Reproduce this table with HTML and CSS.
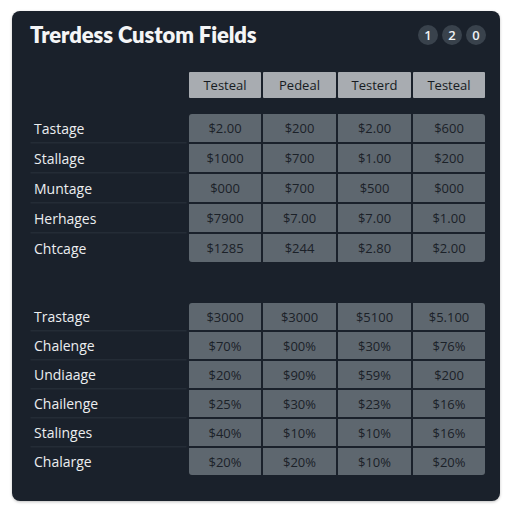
FILE: index.html
```html
<!DOCTYPE html>
<html>
<head>
<meta charset="utf-8">
<link rel="stylesheet" href="styles.css">
</head>
<body>
<div class="panel">
  <div class="top">
    <h1 class="title">Trerdess Custom Fields</h1>
    <div class="badges">
      <span class="badge">1</span>
      <span class="badge">2</span>
      <span class="badge">0</span>
    </div>
  </div>

  <div class="grid head">
    <div class="lbl-empty"></div>
    <div class="hcell">Testeal</div>
    <div class="hcell">Pedeal</div>
    <div class="hcell">Testerd</div>
    <div class="hcell">Testeal</div>
  </div>

  <div class="grid t1">
    <div class="lbl">Tastage</div><div class="cell tl">$2.00</div><div class="cell">$200</div><div class="cell">$2.00</div><div class="cell tr">$600</div>
    <div class="lbl">Stallage</div><div class="cell">$1000</div><div class="cell">$700</div><div class="cell">$1.00</div><div class="cell">$200</div>
    <div class="lbl">Muntage</div><div class="cell">$000</div><div class="cell">$700</div><div class="cell">$500</div><div class="cell">$000</div>
    <div class="lbl">Herhages</div><div class="cell">$7900</div><div class="cell">$7.00</div><div class="cell">$7.00</div><div class="cell">$1.00</div>
    <div class="lbl last">Chtcage</div><div class="cell bl">$1285</div><div class="cell">$244</div><div class="cell">$2.80</div><div class="cell br">$2.00</div>
  </div>

  <div class="grid t2">
    <div class="lbl">Trastage</div><div class="cell tl">$3000</div><div class="cell">$3000</div><div class="cell">$5100</div><div class="cell tr">$5.100</div>
    <div class="lbl">Chalenge</div><div class="cell">$70%</div><div class="cell">$00%</div><div class="cell">$30%</div><div class="cell">$76%</div>
    <div class="lbl">Undiaage</div><div class="cell">$20%</div><div class="cell">$90%</div><div class="cell">$59%</div><div class="cell">$200</div>
    <div class="lbl">Chailenge</div><div class="cell">$25%</div><div class="cell">$30%</div><div class="cell">$23%</div><div class="cell">$16%</div>
    <div class="lbl">Stalinges</div><div class="cell">$40%</div><div class="cell">$10%</div><div class="cell">$10%</div><div class="cell">$16%</div>
    <div class="lbl last">Chalarge</div><div class="cell bl">$20%</div><div class="cell">$20%</div><div class="cell">$10%</div><div class="cell br">$20%</div>
  </div>
</div>
</body>
</html>
```

FILE: styles.css
```css
* { box-sizing: border-box; }
html, body {
  margin: 0;
  padding: 0;
  background: #ffffff;
}
body {
  width: 512px;
  height: 512px;
  padding: 11px 12px 0 12px;
  font-family: "Open Sans", "Liberation Sans", sans-serif;
}
.panel {
  width: 488px;
  height: 490px;
  background: #1a212b;
  border-radius: 8px;
  padding: 0 14px 0 18px;
  box-shadow: 0 1px 3px rgba(0,0,0,0.25);
}
.top {
  display: flex;
  align-items: center;
  justify-content: space-between;
  height: 48px;
  padding-bottom: 2px;
}
.title {
  margin: 0;
  font-family: "Lato", "Open Sans", sans-serif;
  font-weight: 800;
  font-size: 22px;
  color: #f4f5f6;
  letter-spacing: -0.1px;
}
.badges {
  display: flex;
  gap: 4px;
  margin-top: 2px;
}
.badge {
  width: 20px;
  height: 20px;
  border-radius: 50%;
  background: #39424c;
  color: #f0f2f4;
  font-size: 13px;
  font-weight: 600;
  display: flex;
  align-items: center;
  justify-content: center;
}
.grid {
  display: grid;
  grid-template-columns: 157px 72px 73px 73px 72px;
  column-gap: 2px;
  row-gap: 2px;
}
.head {
  margin-top: 13px;
  grid-template-rows: 26px;
}
.hcell {
  background: #a8acb1;
  color: #161b22;
  font-size: 13px;
  display: flex;
  align-items: center;
  justify-content: center;
  border-radius: 1px;
}
.t1 {
  margin-top: 16px;
  grid-auto-rows: 28px;
}
.t2 {
  margin-top: 41px;
  grid-auto-rows: 27px;
}
.lbl {
  color: #eceef0;
  font-size: 14px;
  display: flex;
  align-items: center;
  padding-left: 4px;
  box-shadow: 0 2px 0 -0.5px #242c36;
}
.lbl.last { box-shadow: none; }
.cell {
  background: #5e676f;
  color: #1b2128;
  font-size: 13px;
  display: flex;
  align-items: center;
  justify-content: center;
}
.tl { border-top-left-radius: 3px; }
.tr { border-top-right-radius: 3px; }
.bl { border-bottom-left-radius: 3px; }
.br { border-bottom-right-radius: 3px; }
```
